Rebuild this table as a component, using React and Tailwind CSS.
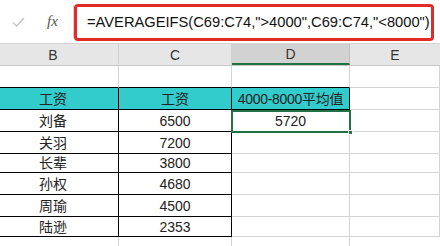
const font = { fontFamily: '"Liberation Sans", "Noto Sans CJK SC", sans-serif' };

const rows = [
  { name: '刘备', pay: '6500', h: 'h-[22px]' },
  { name: '关羽', pay: '7200', h: 'h-[22px]' },
  { name: '长辈', pay: '3800', h: 'h-[19px]' },
  { name: '孙权', pay: '4680', h: 'h-[22px]' },
  { name: '周瑜', pay: '4500', h: 'h-[22px]' },
  { name: '陆逊', pay: '2353', h: 'h-[20px]' },
];

const Cell = ({ className = '', children }) => (
  <div className={`flex items-center justify-center border-b border-r text-[14px] text-[#222] leading-none ${className}`}>
    {children}
  </div>
);

export default function App() {
  return (
    <div className="w-[440px] h-[246px] overflow-hidden bg-white relative" style={font}>
      {/* formula bar */}
      <div className="flex h-[44px] border-b border-[#d4d4d4] bg-white">
        <div className="w-[73px] flex items-center gap-[22px] pl-[12px]">
          <svg width="13" height="10" viewBox="0 0 13 10">
            <path d="M1 5.5 L4.5 9 L12 1" fill="none" stroke="#c8c8c8" strokeWidth="1.6" />
          </svg>
          <span className="text-[15px] italic text-[#555] font-['Liberation_Serif']">fx</span>
        </div>
        <div className="w-px my-[5px] bg-[#d4d4d4]" />
        <div className="mt-[4px] h-[37px] w-[360px] border-[3px] border-[#e32a2a] rounded-[4px] flex items-center pl-[10px] overflow-hidden">
          <span className="text-[14.7px] text-[#111] whitespace-nowrap">
            =AVERAGEIFS(C69:C74,"&gt;4000",C69:C74,"&lt;8000")
          </span>
        </div>
      </div>

      {/* column headers */}
      <div className="flex h-[22px] bg-[#e6e6e6] border-b border-[#c6c6c6] text-[14px] text-[#333] leading-none">
        <div className="w-[119px] flex items-center justify-center border-r border-[#d0d0d0]">
          <span className="-translate-x-[6px]">B</span>
        </div>
        <div className="w-[113px] flex items-center justify-center border-r border-[#d0d0d0]">C</div>
        <div className="w-[118px] flex items-center justify-center bg-[#d2d2d2] border-b-2 border-[#217346] border-r border-r-[#c0c0c0]">D</div>
        <div className="flex-1 flex items-center justify-center">E</div>
      </div>

      {/* empty row */}
      <div className="flex h-[22px]">
        <Cell className="w-[119px] border-b-black border-r-[#d4d4d4]" />
        <Cell className="w-[113px] border-b-black border-r-[#d4d4d4]" />
        <Cell className="w-[118px] border-b-black border-r-[#d4d4d4]" />
        <Cell className="flex-1 border-[#d4d4d4]" />
      </div>

      {/* header row */}
      <div className="flex h-[22px]">
        <Cell className="w-[119px] bg-[#33cccc] border-black"><span className="-translate-x-[6px]">工资</span></Cell>
        <Cell className="w-[113px] bg-[#33cccc] border-black">工资</Cell>
        <Cell className="w-[118px] bg-[#33cccc] border-black whitespace-nowrap tracking-[-0.3px]">4000-8000平均值</Cell>
        <Cell className="flex-1 border-[#d4d4d4]" />
      </div>

      {rows.map((r, i) => (
        <div key={r.name} className={`flex ${r.h}`}>
          <Cell className="w-[119px] border-black"><span className="-translate-x-[6px]">{r.name}</span></Cell>
          <Cell className="w-[113px] border-black">{r.pay}</Cell>
          <Cell className="w-[118px] border-[#d4d4d4]">{i === 0 ? '5720' : ''}</Cell>
          <Cell className="flex-1 border-[#d4d4d4]" />
        </div>
      ))}

      <div className="flex h-[20px]">
        <div className="w-[119px] border-r border-[#d4d4d4]" />
        <div className="w-[113px] border-r border-[#d4d4d4]" />
        <div className="w-[118px] border-r border-[#d4d4d4]" />
      </div>

      {/* selection box on D cell */}
      <div className="absolute left-[231px] top-[110px] w-[120px] h-[23px] border-2 border-[#217346] pointer-events-none">
        <div className="absolute -right-[4px] -bottom-[4px] w-[5px] h-[5px] bg-[#217346] border border-white" />
      </div>
    </div>
  );
}
